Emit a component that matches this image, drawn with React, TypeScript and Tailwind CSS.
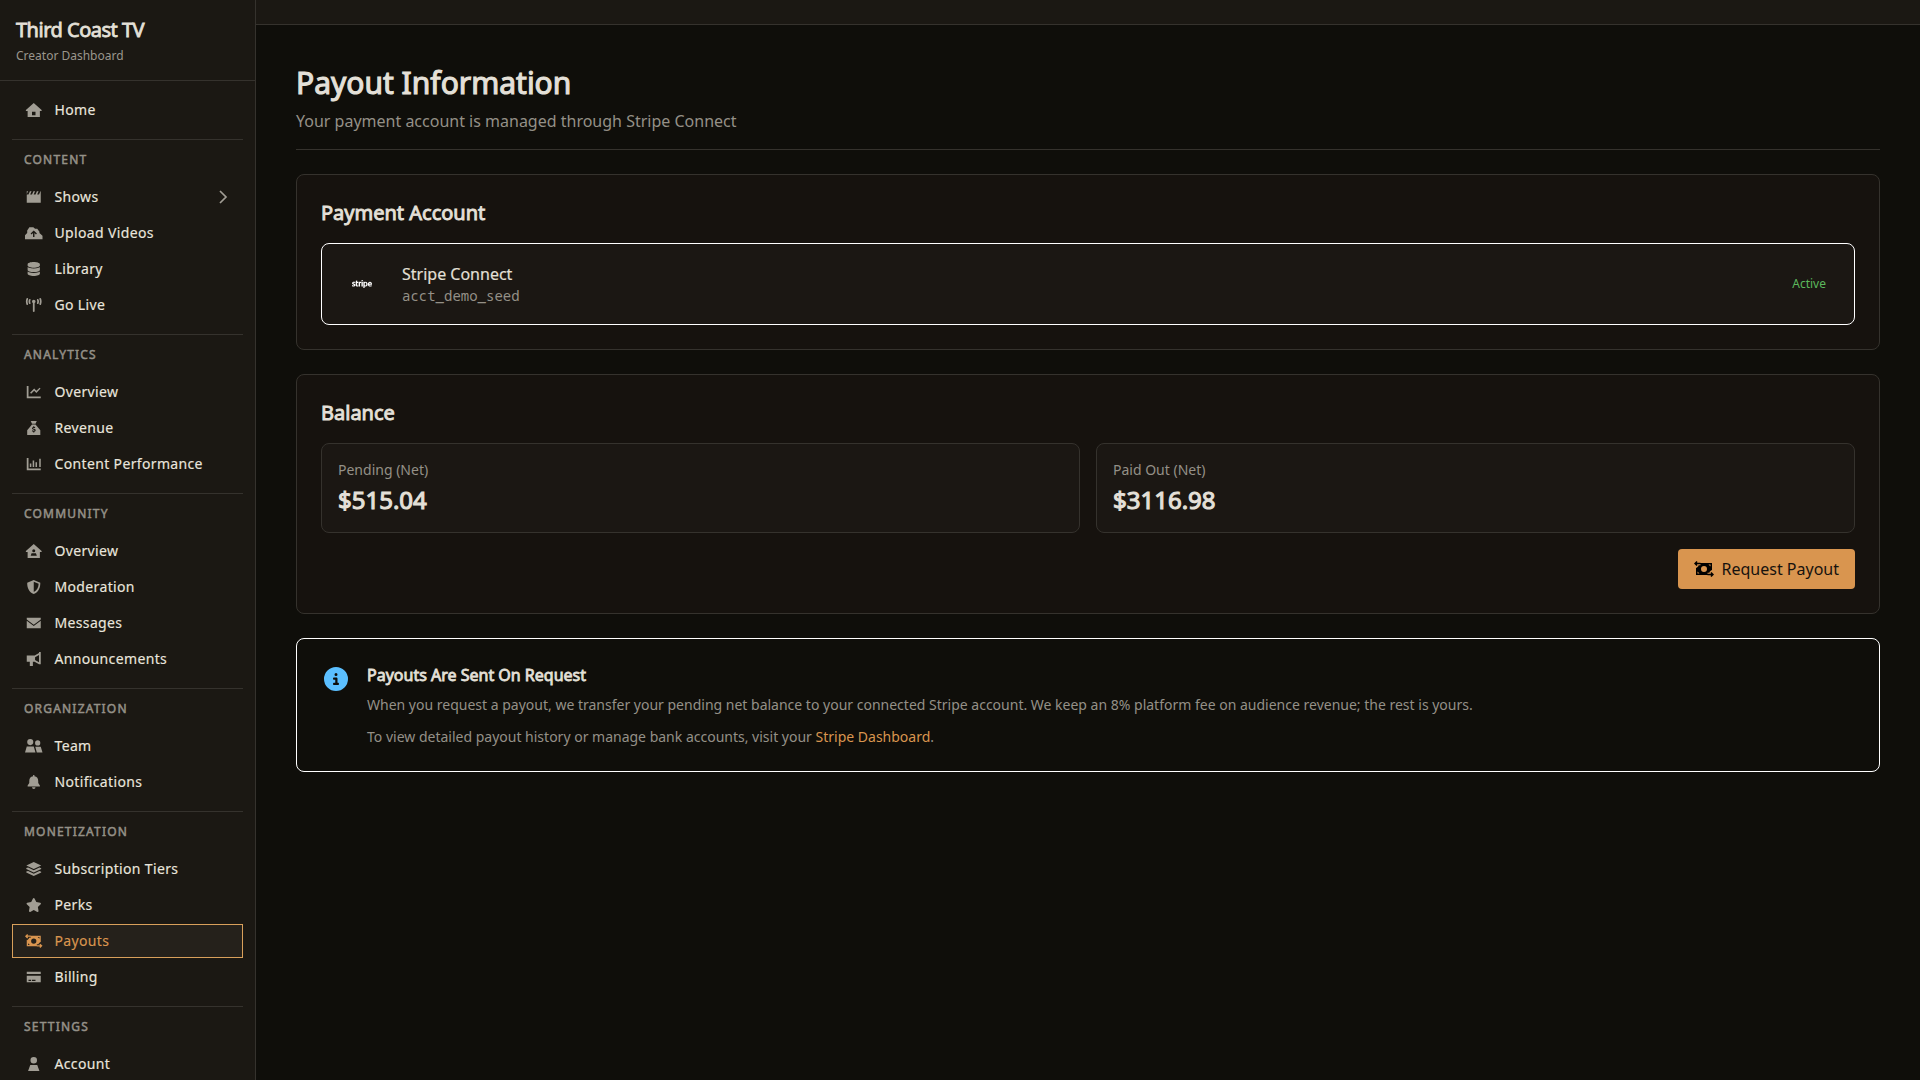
import React from 'react'
import { FaCircleInfo, FaDatabase, FaStar, FaStripe, FaTowerBroadcast } from 'react-icons/fa6'

interface NavItem {
  label: string
  icon: React.ReactNode
  active?: boolean
  expandable?: boolean
}

interface NavSection {
  title?: string
  items: NavItem[]
}

function Glyph({ d, className = 'h-3.5 w-[17.5px]' }: { d: string; className?: string }) {
  return (
    <svg viewBox="0 0 640 512" className={className} fill="currentColor" fillRule="evenodd">
      <path d={d} />
    </svg>
  )
}

const paths = {
  house: 'M320 0L608 256V288H544V512H96V288H32V256ZM256 320V448H384V320Z',
  clapper:
    'M64 48H112L64 150V160H128L180 48H240L188 160H256L308 48H368L316 160H384L436 48H496L444 160H512L564 48H576V464H64Z',
  cloud:
    'M0 480V336L80 256V160L160 48H304L368 96H448L528 208V256L640 352V480ZM320 160L204 276L240 312L294 258V400H346V258L400 312L436 276Z',
  line: 'M64 32H128V416H576V480H64ZM534 96L568 130L416 288L336 208L224 320L184 280L336 128L416 208Z',
  sack: 'M208 0H432L384 96H256ZM256 128H384L560 336V512H80V336ZM300 192V220C250 224 238 296 290 312L336 326C356 336 344 356 320 356C300 356 282 350 266 340L250 376C268 386 286 392 300 394V424H340V394C400 386 412 312 356 294L310 280C290 272 296 256 320 256C336 256 350 260 362 264L376 228C364 224 352 222 340 220V192Z',
  column:
    'M64 32H128V416H576V480H64ZM176 240H232V368H176ZM280 128H336V368H280ZM384 192H440V368H384ZM520 64H576V368H520Z',
  houseUser:
    'M320 0L608 256V288H544V512H96V288H32V256ZM320 192A56 56 0 1 0 320 304A56 56 0 1 0 320 192ZM208 432H432L400 336H240Z',
  shield: 'M320 0L560 96C560 288 500 430 320 512C140 430 80 288 80 96ZM320 66V440C448 376 494 270 498 140Z',
  envelope: 'M64 64H576V128L320 320L64 128ZM64 176L320 368L576 176V448H64Z',
  bullhorn: 'M512 0H576V448H512L352 352H288V512H176V352H64V128H352L512 32ZM512 108L368 192V290L512 372Z',
  group:
    'M192 0A112 112 0 1 1 192 224A112 112 0 1 1 192 0ZM464 48A96 96 0 1 1 464 240A96 96 0 1 1 464 48ZM64 272H320L384 496H0ZM376 280H576L640 496H432Z',
  bell: 'M296 0H344V48C440 64 484 130 484 224V288L544 384V416H96V384L156 288V224C156 130 200 64 296 48ZM256 448H384A64 64 0 0 1 256 448Z',
  layers:
    'M320 0L592 128L320 256L48 128ZM48 216L112 202L320 304L528 202L592 232V256L320 384L48 256ZM48 344L112 330L320 432L528 330L592 360V384L320 512L48 384Z',
  transfer:
    'M80 0L114 34L92 56H208V104H92L114 126L80 160L0 80ZM560 512L526 478L548 456H432V408H548L526 386L560 352L640 432ZM208 64H576V304L560 288L496 352V376H432V448H64V208L80 224L144 160V136H208ZM320 160A96 96 0 1 0 320 352A96 96 0 1 0 320 160ZM112 336V400H176ZM464 112L528 176V112Z',
  card: 'M64 64H576V144H64ZM64 208H576V448H64ZM128 352V400H224V352ZM256 352V400H384V352Z',
  user: 'M320 0A120 120 0 1 1 320 240A120 120 0 1 1 320 0ZM192 288H448L528 512H112Z',
}

const iconSize = 'h-3.5 w-[17.5px]'

const sections: NavSection[] = [
  { items: [{ label: 'Home', icon: <Glyph d={paths.house} /> }] },
  {
    title: 'Content',
    items: [
      { label: 'Shows', icon: <Glyph d={paths.clapper} />, expandable: true },
      { label: 'Upload Videos', icon: <Glyph d={paths.cloud} /> },
      { label: 'Library', icon: <FaDatabase className={iconSize} /> },
      { label: 'Go Live', icon: <FaTowerBroadcast className={iconSize} /> },
    ],
  },
  {
    title: 'Analytics',
    items: [
      { label: 'Overview', icon: <Glyph d={paths.line} /> },
      { label: 'Revenue', icon: <Glyph d={paths.sack} /> },
      { label: 'Content Performance', icon: <Glyph d={paths.column} /> },
    ],
  },
  {
    title: 'Community',
    items: [
      { label: 'Overview', icon: <Glyph d={paths.houseUser} /> },
      { label: 'Moderation', icon: <Glyph d={paths.shield} /> },
      { label: 'Messages', icon: <Glyph d={paths.envelope} /> },
      { label: 'Announcements', icon: <Glyph d={paths.bullhorn} /> },
    ],
  },
  {
    title: 'Organization',
    items: [
      { label: 'Team', icon: <Glyph d={paths.group} /> },
      { label: 'Notifications', icon: <Glyph d={paths.bell} /> },
    ],
  },
  {
    title: 'Monetization',
    items: [
      { label: 'Subscription Tiers', icon: <Glyph d={paths.layers} /> },
      { label: 'Perks', icon: <FaStar className={iconSize} /> },
      { label: 'Payouts', icon: <Glyph d={paths.transfer} />, active: true },
      { label: 'Billing', icon: <Glyph d={paths.card} /> },
    ],
  },
  {
    title: 'Settings',
    items: [{ label: 'Account', icon: <Glyph d={paths.user} /> }],
  },
]

const balances = [
  { label: 'Pending (Net)', amount: 515.04 },
  { label: 'Paid Out (Net)', amount: 3116.98 },
]

function Sidebar() {
  return (
    <aside className="flex h-full w-64 shrink-0 flex-col overflow-hidden border-r border-[#35322d] bg-[#1b1813]">
      <div className="h-[81px] shrink-0 border-b border-[#35322d] px-4 pt-4">
        <h1 className="text-xl leading-7 tracking-[-0.025em] text-[#e4e0d8] [-webkit-text-stroke:0.8px]">Third Coast TV</h1>
        <p className="mt-1 text-xs text-[#9a968d]">Creator Dashboard</p>
      </div>
      <nav className="px-3 pt-3">
        {sections.map((section, i) => (
          <div key={i} className={section.title ? 'mt-3 border-t border-[#35322d]' : ''}>
            {section.title && (
              <h3 className="flex h-10 items-center px-3 text-xs tracking-[0.1em] text-[#949087] uppercase [-webkit-text-stroke:0.5px]">
                {section.title}
              </h3>
            )}
            <ul className="flex flex-col gap-0.5">
              {section.items.map(item => (
                <li
                  key={item.label}
                  className={`flex h-[34px] items-center gap-3 border px-3 text-sm tracking-[0.025em] [-webkit-text-stroke:0.15px] ${
                    item.active ? 'border-[#d9a05b] bg-[#25211b] text-[#d9954f]' : 'border-transparent text-[#e9e5dd]'
                  }`}
                >
                  <span className={`flex w-[17.5px] shrink-0 justify-center ${item.active ? '' : 'text-[#a19d94]'}`}>
                    {item.icon}
                  </span>
                  {item.label}
                  {item.expandable && (
                    <svg viewBox="0 0 14 14" className="ml-auto h-3.5 w-3.5 text-[#a19d94]" fill="none" stroke="currentColor" strokeWidth="1.7">
                      <path d="M4 1L10 7L4 13" />
                    </svg>
                  )}
                </li>
              ))}
            </ul>
          </div>
        ))}
      </nav>
    </aside>
  )
}

export default function App() {
  return (
    <div className="flex h-screen overflow-hidden bg-[#0f0e0a] font-['Noto_Sans',sans-serif] text-[#e4e0d8]">
      <Sidebar />
      <div className="flex min-w-0 flex-1 flex-col">
        <header className="h-[25px] shrink-0 border-b border-[#35322d] bg-[#1b1813]" />
        <main className="flex flex-col gap-6 px-10 pt-10">
          <div className="h-[85px] border-b border-[#35322d]">
            <h1 className="text-3xl leading-9 [-webkit-text-stroke:1.1px]">Payout Information</h1>
            <p className="mt-2 text-base text-[#949087]">Your payment account is managed through Stripe Connect</p>
          </div>

          <section className="rounded-lg border border-[#35322d] bg-[#16120e] p-6">
            <h2 className="mb-4 text-xl [-webkit-text-stroke:0.9px]">Payment Account</h2>
            <div className="flex items-center gap-4 rounded-lg border border-white bg-[#1b1713] p-4">
              <div className="flex h-12 w-12 items-center justify-center text-white">
                <FaStripe className="h-4 w-5" />
              </div>
              <div>
                <p className="text-base [-webkit-text-stroke:0.15px]">Stripe Connect</p>
                <p className="font-['Noto_Sans_Mono','DejaVu_Sans_Mono',monospace] text-sm text-[#949087]">acct_demo_seed</p>
              </div>
              <span className="ml-auto px-3 text-xs text-[#5cb85c]">Active</span>
            </div>
          </section>

          <section className="rounded-lg border border-[#35322d] bg-[#16120e] p-6">
            <h2 className="mb-4 text-xl [-webkit-text-stroke:0.9px]">Balance</h2>
            <div className="grid grid-cols-2 gap-4">
              {balances.map(balance => (
                <div key={balance.label} className="rounded-lg border border-[#35322d] bg-[#1b1713] p-4">
                  <p className="text-sm text-[#949087]">{balance.label}</p>
                  <p className="mt-1 text-2xl [-webkit-text-stroke:1.1px]">${balance.amount.toFixed(2)}</p>
                </div>
              ))}
            </div>
            <div className="mt-4 flex justify-end">
              <button className="flex h-10 items-center gap-2 rounded bg-[#d9954f] px-4 text-base text-[#16120e]">
                <Glyph d={paths.transfer} className="h-4 w-5 text-black" />
                Request Payout
              </button>
            </div>
          </section>

          <section className="flex gap-4 rounded-lg border border-white p-6">
            <div className="flex w-[30px] shrink-0 justify-center pt-1">
              <FaCircleInfo className="h-6 w-6 text-[#5bbfff]" />
            </div>
            <div>
              <h3 className="mb-2 text-base [-webkit-text-stroke:0.8px]">Payouts Are Sent On Request</h3>
              <p className="mb-3 text-sm text-[#949087]">
                When you request a payout, we transfer your pending net balance to your connected Stripe account. We keep an 8%
                platform fee on audience revenue; the rest is yours.
              </p>
              <p className="text-sm text-[#949087]">
                To view detailed payout history or manage bank accounts, visit your{' '}
                <a href="#" className="text-[#d9954f]">Stripe Dashboard</a>.
              </p>
            </div>
          </section>
        </main>
      </div>
    </div>
  )
}
